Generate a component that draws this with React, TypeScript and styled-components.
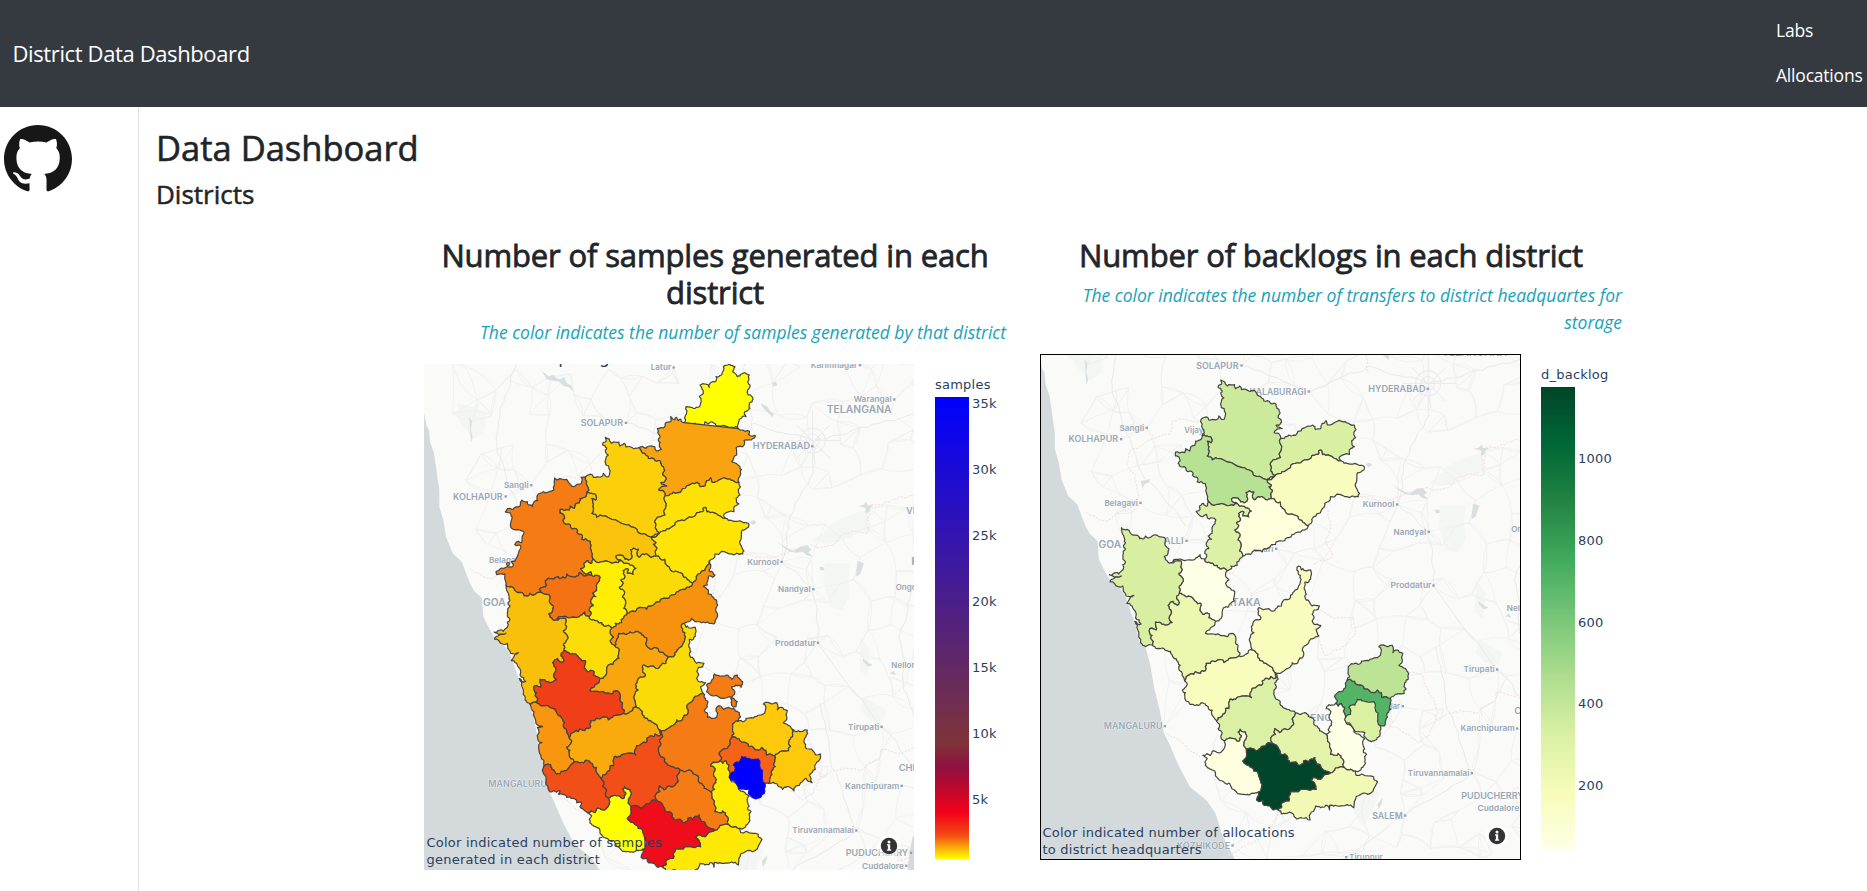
import React from "react";
import styled, { createGlobalStyle } from "styled-components";

const GlobalStyle = createGlobalStyle`
  *, *::before, *::after { box-sizing: border-box; }
  html, body { margin: 0; height: 100%; overflow: hidden; background: #fff; }
  body { font-family: "Open Sans", "Noto Sans", sans-serif; color: #212529; font-size: 17px; }
`;

/* ---------- geometry: map units are a third of a pixel ---------- */

type Pt = [number, number];

const parse = (s: string): Pt[] =>
  s.trim().split(/\s+/).map((p) => p.split(",").map(Number) as Pt);

const random = (seed: number) => () => {
  seed = (seed * 1664525 + 1013904223) >>> 0;
  return seed / 4294967296;
};

const roughen = (pts: Pt[], rnd: () => number, amount: number, depth: number): Pt[] => {
  if (depth === 0) return pts;
  const out: Pt[] = [pts[0]];
  for (let i = 1; i < pts.length; i++) {
    const [ax, ay] = pts[i - 1];
    const [bx, by] = pts[i];
    const len = Math.hypot(bx - ax, by - ay);
    if (len > 7) {
      const d = (rnd() - 0.5) * Math.min(11, len * amount);
      const t = 0.4 + rnd() * 0.2;
      out.push([ax + (bx - ax) * t - ((by - ay) / len) * d, ay + (by - ay) * t + ((bx - ax) / len) * d]);
    }
    out.push([bx, by]);
  }
  return roughen(out, rnd, amount, depth - 1);
};

const borders: Record<string, string> = {
  bidarOut: "955,236 958,208 978,200 975,185 990,175 988,160 999,148 985,135 990,110 983,95 988,75 965,72 952,80 938,65 945,50 928,42 910,50 905,75 888,80 885,95 870,100 868,112 855,102 840,105 850,130 838,140 840,168 820,175 798,170 800,190 795,200 792,218",
  bidarKal: "792,218 812,222 830,225 848,232 855,215 863,222 880,218 890,228 935,232 955,236",
  kalWest: "792,218 783,208 775,212 770,202 764,210 752,200 752,215 735,222 731,234 712,236 713,248 720,262 715,270 718,288 724,298 705,298 704,290 690,288 678,295 657,293",
  kalVij: "657,293 663,302 674,310 685,325 705,332 722,335 730,350 728,375 738,385 730,398 722,398 740,408 722,412 716,420 733,427 735,438",
  kalYad: "735,438 750,432 760,427 780,428 800,408 832,397 840,410 855,408 860,392 872,384 876,397 905,386 930,387 945,396 957,398",
  kalEast: "957,398 962,370 960,350 935,335 950,315 952,290 968,290 972,272 990,270 1007,258 985,252 988,243 965,240 955,236",
  vijWest: "657,293 640,295 618,291 612,280 600,288 597,276 575,280 568,268 556,262 558,274 548,285 560,294 556,300 565,315 557,340 566,348 566,380 556,378 550,370 548,378 520,382 518,376 497,380",
  vijBel: "497,380 500,395 505,412 500,428",
  vijBag: "500,428 515,430 525,432 527,450 515,445 518,470 515,490 530,502 540,495 560,500 620,525 650,537 655,548 695,562",
  vijYad: "695,562 705,553 718,548 706,535 704,515 712,502 722,500 735,495 733,450 735,438",
  yadEast: "957,398 955,425 960,435 948,445 957,462 945,468 942,485 912,493 917,505",
  yadRai: "917,505 890,492 865,484 861,486 856,472 850,474 848,485 830,488 800,506 780,512 765,525 740,537 718,550 695,562",
  raiEast: "917,505 935,512 965,515 974,518 987,524 985,532 967,540 964,560 965,590 968,612 950,610 920,608 885,612 868,632",
  raiBal: "868,632 858,652 835,672 830,685 818,700",
  raiKop: "705,618 715,618 722,628 734,628 735,640 750,658 765,664 780,668 792,682 805,690 818,700",
  raiBag: "695,562 700,572 708,578 700,582 710,592 706,608 705,618",
  bagBel: "500,428 497,440 480,445 478,458 466,462 463,475 450,468 448,480 420,478 420,490 432,498 428,512 432,520 445,522 455,536 472,540 475,552 483,553 485,568 510,573 513,600 518,625",
  bagGad: "518,625 535,638 550,635 583,638 605,632",
  bagKop: "605,632 588,618 608,616 615,628 635,625 632,600 655,598 657,622 668,612 680,612 695,622 705,618",
  belOut: "497,380 483,382 485,400 465,408 448,400 440,388 418,386 410,390 404,384 402,420 370,425 352,436 353,452 340,460 338,470 325,465 322,455 306,450 300,468 280,478 262,476 256,486 272,490 276,505 273,533 300,540 312,550 305,578 295,574 284,583 302,587 292,620 274,635 278,650 258,652 245,654 228,665 230,674 255,672 258,705",
  belUk: "258,705 275,710 285,722 306,728 312,738 325,738 330,730 340,736 350,730 368,730",
  belDha: "368,730 358,718 368,712 380,705 376,692 386,685 415,680 418,686 438,683 440,672 455,680 470,678 478,668 490,678 515,675",
  gadNotch: "518,625 515,640 508,638 504,632 492,640 494,650 482,656 492,668 502,672 513,665 515,675",
  dhaGad: "515,675 530,676 541,682 532,700 530,722 518,730 528,740 513,750 520,768 508,782 514,790 508,800 515,810",
  dhaHav: "437,805 412,806 420,800 455,802 478,800 482,795 494,786 498,798 508,800 515,810",
  dhaUk: "368,730 380,733 390,740 388,752 400,768 397,782 386,792 397,808 408,810 437,805",
  gadHav: "515,810 525,812 535,818 545,818 552,828 565,826 575,834",
  gadBal: "575,834 588,828 586,820 605,818 612,800 622,790",
  gadKop: "622,790 612,775 613,745 608,742 610,720 598,712 607,705 603,690 615,678 610,662 625,658 622,670 640,673 640,662 648,655 630,645 622,640 605,632",
  kopBal: "622,790 645,785 650,778 680,778 686,768 720,755 722,748 745,745 755,735 775,725 800,712 808,712 818,700",
  balEast: "868,632 872,650 870,665 885,675 878,682 866,678 862,705 850,710 865,720 864,732 880,742 890,752 893,765 888,775 892,790 885,818 870,820 855,818 830,815 815,805 808,815 790,820",
  balChi: "790,820 784,832 795,848 794,870 785,890 772,900 765,915 752,920",
  balDav: "585,888 590,868 597,850 615,853 630,846 655,845 665,855 680,864 678,885 690,897 708,893 716,903 735,915 752,920",
  havBal: "575,834 570,846 580,862 570,872 585,888",
  havDav: "585,888 597,905 597,925 585,932 580,942 565,945 560,965 550,985 540,986",
  havShi: "540,986 520,975 522,965 502,965 495,942 496,932 478,925 465,912 450,912 432,902",
  havUk: "432,902 430,885 440,870 436,850 430,842 440,830 437,805",
  ukShi: "432,902 424,910 432,930 425,938 413,926 398,938 408,960 402,972 410,990 398,996 385,995 375,990 360,988 362,1012 343,1008 350,1028 346,1038 352,1058",
  ukCoast: "352,1058 340,1056 330,1062 315,1050 306,1010 298,986 317,994 300,975 294,950 290,940 274,932 295,908 272,910 262,880 248,882 238,874 224,868 228,860 258,850 240,854 222,846 240,840 250,844 262,832 270,808 262,788 270,768 264,758 268,742 258,705",
  shiDav: "540,986 525,1005 510,1022 540,1026 575,1032 580,1024 597,1026 600,1050 606,1068 610,1090",
  shiChk: "610,1090 580,1098 565,1110 562,1102 530,1105 525,1112 512,1112 510,1134 500,1134 495,1142 480,1137 475,1145 458,1148 448,1165",
  shiUdu: "352,1060 370,1067 385,1068 405,1076 410,1088 422,1098 428,1108 430,1130 440,1148 448,1165",
  uduChk: "448,1165 454,1178 440,1192 450,1200 448,1210 463,1235",
  uduDk: "463,1235 450,1248 436,1262 420,1272 405,1266 395,1258 392,1244 372,1248",
  uduCoast: "372,1248 362,1215 356,1185 366,1178 354,1170 352,1132 368,1130 348,1120 342,1085 330,1062 352,1060",
  dkChk: "463,1235 480,1238 490,1238 500,1230 515,1240 530,1252 536,1275 543,1285",
  dkHas: "543,1285 552,1295 548,1308 560,1320 556,1330 566,1344",
  dkKod: "566,1344 563,1372 548,1380 534,1374 525,1388 502,1388",
  dkSouth: "502,1388 488,1376 480,1370 485,1358 470,1358 460,1345 440,1342 436,1335 415,1332 420,1322 400,1322 390,1326 378,1290 372,1248",
  chkDav: "610,1090 630,1085 650,1072",
  chkChi: "650,1072 662,1080 668,1095 682,1105 695,1115 718,1140",
  chkHas: "718,1140 722,1155 705,1152 700,1160 680,1165 678,1178 650,1187 648,1215 608,1213 600,1220 583,1220 580,1248 570,1248 568,1262 548,1275 543,1285",
  davChi: "752,920 738,940 720,948 715,955 700,948 672,945 668,960 675,980 652,992 648,1005 655,1020 645,1032 650,1072",
  chiEast: "790,820 798,832 802,828 826,832 826,850 820,868 808,868 806,885 810,895 808,912 820,925 830,940 840,938 852,940 848,950 836,952 830,965 836,975 830,985 840,996 856,998 842,1010 845,1020 850,1030",
  chiTum: "850,1030 832,1038 820,1050 802,1065 803,1092 792,1096 785,1112 770,1110 765,1122 745,1135 730,1142 718,1140",
  tumNorth: "850,1030 853,1042 864,1055 862,1070 853,1080 862,1102 890,1102 893,1088 888,1082 892,1070 902,1068 910,1078 940,1075 945,1082 958,1088 955,1112 938,1122",
  tumCkb: "938,1122 938,1135 942,1150 935,1162",
  tumRur: "935,1162 930,1185 922,1195 898,1208 905,1222 900,1232",
  tumRam: "900,1232 880,1236 872,1248 885,1262 883,1280 888,1298 878,1310 884,1318 872,1325",
  tumMan: "872,1325 852,1315 845,1300 835,1295 828,1275 815,1265 800,1262 780,1260",
  tumHas: "780,1260 768,1255 755,1250 740,1240 733,1225 718,1212 715,1195 722,1185 718,1170 728,1160 718,1140",
  hasMan: "780,1260 770,1280 775,1292 765,1306 740,1312 732,1320 718,1308 720,1325 710,1330 712,1353",
  hasMys: "712,1353 695,1352 690,1360 678,1362 668,1372 650,1368 633,1372",
  hasKod: "633,1372 625,1348 632,1335 630,1318 622,1318 614,1310 608,1318 618,1330 612,1345 595,1338 572,1340 566,1344",
  kodOut: "502,1388 515,1398 508,1408 516,1425 530,1432 545,1455 575,1475 582,1472 600,1495 620,1505 640,1507 655,1502 668,1498",
  kodMys: "668,1498 680,1475 672,1455 655,1435 640,1418 622,1405 633,1388 633,1372",
  mysMan: "712,1353 728,1365 737,1385 755,1390 762,1410 785,1412 795,1418 804,1405 820,1410 825,1400 838,1395 845,1415 855,1418 865,1433 885,1441",
  mysCha: "885,1441 862,1452 855,1460 840,1455 826,1462 838,1475 842,1490 805,1490 765,1497 760,1525 740,1530 738,1545 728,1552",
  mysOut: "728,1552 715,1552 703,1540 682,1534 684,1525 663,1522 668,1498",
  manRam: "872,1325 876,1345 885,1385 905,1388 908,1382 920,1398 925,1405 927,1425",
  manCha: "927,1425 900,1426 885,1441",
  ramRur: "900,1232 908,1240 918,1232 928,1245 924,1256 930,1275",
  ramUrb: "930,1275 935,1295 955,1310 975,1328 988,1338",
  ramOut: "988,1338 982,1355 984,1380 993,1385 990,1412 978,1425 960,1435",
  ramCha: "960,1435 945,1430 927,1425",
  chaOut: "960,1435 962,1448 1000,1450 1015,1453 1026,1468 1005,1502 978,1504 962,1512 955,1545 935,1536 905,1540 882,1538 882,1552 870,1538 855,1545 840,1540 828,1558 824,1582 800,1576 783,1579 775,1568 755,1562 740,1564 728,1552",
  rurCkb: "935,1162 950,1165 962,1174 978,1178 985,1188 1000,1192 1015,1200 1025,1192 1038,1200 1040,1215 1065,1217",
  rurKol: "1065,1217 1062,1240 1066,1250 1055,1262 1050,1285 1046,1300",
  rurIn: "1046,1300 1030,1304 1010,1300 1005,1245 975,1240 965,1265 930,1275",
  ckbOut: "938,1122 958,1112 975,1112 978,1105 1000,1104 1022,1095 1035,1085 1030,1062 1055,1062 1070,1058 1072,1080 1085,1072 1102,1082 1100,1108 1090,1118 1110,1128 1117,1138",
  ckbKol: "1117,1138 1118,1160 1108,1170 1106,1202 1080,1205 1065,1217",
  kolOut: "1117,1138 1135,1142 1162,1140 1158,1160 1154,1165 1156,1192 1178,1202 1185,1212 1202,1212 1194,1235 1185,1245 1186,1258 1168,1275 1176,1298 1158,1285 1142,1298 1122,1323 1100,1310 1088,1318 1072,1302 1046,1300",
  urban: "965,1220 985,1225 1015,1227 1020,1250 1028,1262 1026,1285 1036,1310 1025,1335 1008,1347 985,1330 988,1320 975,1318 955,1310 932,1290 930,1275 945,1265 940,1245 958,1238 965,1220",
  enclaveA: "883,972 892,976 920,975 935,988 942,978 952,975 958,985 968,995 963,1012 948,1005 935,1010 942,1020 935,1042 910,1045 880,1038 860,1025 860,1005 872,998 883,972",
  enclaveB: "932,1045 945,1050 952,1055 948,1070 935,1066 932,1045",
};

const arcs: Record<string, Pt[]> = {};
Object.keys(borders).forEach((name, i) => {
  arcs[name] = roughen(parse(borders[name]), random(i * 977 + 31), 0.5, 2);
});

const outline = (list: string) =>
  list
    .split(" ")
    .map((name) => (name[0] === "-" ? [...arcs[name.slice(1)]].reverse() : arcs[name]))
    .flat()
    .map(([x, y], i) => `${i ? "L" : "M"}${x.toFixed(1)} ${y.toFixed(1)}`)
    .join("") + "Z";

interface District { d: string; samples: string; backlog?: string }

const districts: District[] = [
  { d: outline("bidarOut bidarKal"), samples: "#ffff00" },
  { d: outline("kalWest kalVij kalYad kalEast"), samples: "#f8a30f" },
  { d: outline("vijWest vijBel vijBag vijYad -kalVij"), samples: "#fbcf0a", backlog: "#cbea9b" },
  { d: outline("kalYad yadEast yadRai vijYad"), samples: "#fee105", backlog: "#d9f0a2" },
  { d: outline("-yadRai raiEast raiBal -raiKop -raiBag"), samples: "#ffe404", backlog: "#f8fcbf" },
  { d: outline("vijBag raiBag -bagKop -bagGad -bagBel"), samples: "#f9c20b", backlog: "#b8e293" },
  { d: outline("-vijBel belOut belUk belDha -gadNotch -bagBel"), samples: "#f57c14" },
  { d: outline("belDha dhaGad -dhaHav -dhaUk"), samples: "#f47214" },
  { d: outline("gadNotch dhaGad gadHav gadBal gadKop -bagGad"), samples: "#ffee00", backlog: "#ddf1a6" },
  { d: outline("bagKop raiKop -kopBal gadKop"), samples: "#fbdb06", backlog: "#ffffdc" },
  { d: outline("kopBal -raiBal balEast balChi -balDav -havBal gadBal"), samples: "#f7920f" },
  { d: outline("dhaHav gadHav havBal havDav havShi havUk"), samples: "#fbdc07", backlog: "#ffffe5" },
  { d: outline("belUk dhaUk -havUk ukShi ukCoast"), samples: "#f9c00b", backlog: "#d8efa1" },
  { d: outline("-ukShi -havShi shiDav shiChk -shiUdu"), samples: "#f03f17", backlog: "#ebf6af" },
  { d: outline("shiUdu uduChk uduDk uduCoast"), samples: "#f8960f" },
  { d: outline("-uduDk dkChk dkHas dkKod dkSouth"), samples: "#f24e18" },
  { d: outline("-shiChk chkDav chkChi chkHas -dkChk -uduChk"), samples: "#f9ab0e", backlog: "#f8fcbd" },
  { d: outline("balDav davChi -chkDav -shiDav -havDav"), samples: "#f9a50e" },
  { d: outline("-balChi chiEast chiTum -chkChi -davChi"), samples: "#fbdb06", backlog: "#f8fcbd" },
  { d: outline("-chiTum tumNorth tumCkb tumRur tumRam tumMan tumHas"), samples: "#f57c14" },
  { d: outline("-chkHas -tumHas hasMan hasMys hasKod -dkHas"), samples: "#f24e18", backlog: "#daf0a4" },
  { d: outline("dkKod kodOut kodMys hasKod"), samples: "#ffff00", backlog: "#ffffdf" },
  { d: outline("-tumMan manRam manCha -mysMan -hasMan"), samples: "#f57c14", backlog: "#e3f4aa" },
  { d: outline("-tumRam ramRur ramUrb ramOut ramCha -manRam"), samples: "#ffec02", backlog: "#ffffe5" },
  { d: outline("-manCha -ramCha chaOut -mysCha"), samples: "#ffe904", backlog: "#f1f9b5" },
  { d: outline("mysMan mysCha mysOut kodMys -hasMys"), samples: "#f00d1b", backlog: "#00452a" },
  { d: outline("rurCkb rurKol rurIn -ramRur -tumRur"), samples: "#f46316", backlog: "#54b365" },
  { d: outline("ckbOut ckbKol -rurCkb -tumCkb"), samples: "#fdc90a", backlog: "#bde494" },
  { d: outline("kolOut -rurKol -ckbKol"), samples: "#fdc90a" },
  { d: outline("enclaveA"), samples: "#f57c14" },
  { d: outline("enclaveB"), samples: "#f57c14" },
  { d: outline("urban"), samples: "#0000ff", backlog: "#daf0a3" },
];

/* ---------- base map ---------- */

type Field = "samples" | "backlog";

interface Place { t: string; x: number; w: number; y: number; dot?: number; size?: number; only?: Field }

const places: Place[] = [
  { t: "Latur", x: 692, w: 62, y: 53, dot: 761, only: "samples" },
  { t: "Karimnagar", x: 1172, w: 140, y: 46, dot: 1320, only: "samples" },
  { t: "Warangal", x: 1301, w: 114, y: 149, dot: 1423, only: "samples" },
  { t: "TELANGANA", x: 1220, w: 195, y: 179, size: 29 },
  { t: "SOLAPUR", x: 482, w: 127, y: 219, dot: 618, size: 25 },
  { t: "HYDERABAD", x: 998, w: 172, y: 289, dot: 1177, size: 25 },
  { t: "KALABURAGI", x: 642, w: 170, y: 297, dot: 820, size: 25, only: "backlog" },
  { t: "Vijayapura", x: 446, w: 125, y: 414, only: "backlog" },
  { t: "Sangli", x: 252, w: 74, y: 406, dot: 334 },
  { t: "KOLHAPUR", x: 99, w: 149, y: 440, dot: 257, size: 25 },
  { t: "Belagavi", x: 207, w: 100, y: 631, dot: 315 },
  { t: "Kurnool", x: 982, w: 95, y: 636, dot: 1085 },
  { t: "Nandyal", x: 1074, w: 98, y: 718, dot: 1180 },
  { t: "Ongole", x: 1427, w: 84, y: 711 },
  { t: "VIJAYAWADA", x: 1459, w: 176, y: 483, size: 25, only: "samples" },
  { t: "PRADESH", x: 1474, w: 170, y: 634, size: 29, only: "samples" },
  { t: "GOA", x: 189, w: 68, y: 757, size: 29 },
  { t: "HUBBALLI", x: 310, w: 134, y: 745, dot: 453, size: 25, only: "backlog" },
  { t: "Ballari", x: 640, w: 74, y: 769, dot: 722, only: "backlog" },
  { t: "KARNATAKA", x: 478, w: 198, y: 930, size: 29, only: "backlog" },
  { t: "Proddatur", x: 1065, w: 123, y: 879, dot: 1194 },
  { t: "Nellore", x: 1414, w: 84, y: 947 },
  { t: "Tirupati", x: 1284, w: 94, y: 1131, dot: 1385 },
  { t: "Kolar", x: 1037, w: 57, y: 1241, dot: 1102, only: "backlog" },
  { t: "CHENNAI", x: 1436, w: 130, y: 1254, size: 25 },
  { t: "BENGALURU", x: 804, w: 190, y: 1277, size: 25, only: "backlog" },
  { t: "MANGALURU", x: 205, w: 176, y: 1301, dot: 388, size: 25 },
  { t: "Kanchipuram", x: 1275, w: 163, y: 1308, dot: 1445 },
  { t: "Tiruvannamalai", x: 1117, w: 185, y: 1442, dot: 1309 },
  { t: "PUDUCHERRY", x: 1277, w: 188, y: 1509, dot: 1473, size: 25 },
  { t: "Cuddalore", x: 1326, w: 126, y: 1548, dot: 1459 },
  { t: "SALEM", x: 1010, w: 92, y: 1569, dot: 1109, size: 25, only: "backlog" },
  { t: "KOZHIKODE", x: 424, w: 160, y: 1659, dot: 591, size: 25, only: "backlog" },
  { t: "Tiruppur", x: 941, w: 101, y: 1694, dot: 932, only: "backlog" },
];

const sea =
  "M0 180L12 190L20 228L27 240L30 275L42 310L48 350L52 380L58 420L58 470L70 510L78 560L98 610L125 635L150 700L162 722L186 745L190 800L205 830L222 860L250 882L270 912L298 990L312 1048L330 1064L345 1120L356 1185L372 1250L385 1320L400 1350L430 1420L463 1482L485 1500L515 1525L540 1562L558 1622L580 1665L603 1710L0 1710Z";

const lakes = [
  "M365 62L385 78L400 75L410 85L422 88L432 80L440 98L455 108L460 125L448 112L430 108L418 95L398 92L380 88Z",
  "M1022 160L1040 168L1052 185L1062 190L1058 202L1045 190L1030 175Z",
  "M1055 98L1068 95L1072 106L1060 110Z",
  "M1065 570L1085 585L1108 597L1122 603L1140 590L1160 586L1175 600L1165 606L1178 620L1160 616L1148 605L1130 608L1110 605L1090 592Z",
  "M1313 632L1332 640L1320 672L1308 680L1310 655Z",
  "M1315 468L1330 465L1338 456L1343 466L1360 466L1350 474L1345 488L1336 488L1338 474Z",
  "M990 515L1002 510L1010 518L998 524Z",
  "M1328 925L1345 938L1358 945L1345 950L1330 935Z",
  "M1408 972L1420 962L1428 975L1415 972Z",
  "M1025 1535L1042 1515L1038 1535L1030 1550Z",
  "M1198 652L1210 650L1214 660L1202 662Z",
  "M148 200L156 215L152 238L158 262L153 278L150 240Z",
  "M316 565L345 560L338 570L328 575L320 588Z",
];

const parks = [
  "M1210 550L1240 520L1300 490L1340 480L1345 540L1300 548L1260 575L1215 580L1180 570Z",
  "M1215 640L1290 640L1285 700L1290 740L1265 780L1230 770L1210 700Z",
  "M110 160L160 170L200 190L195 240L165 265L140 240L115 210Z",
  "M1330 1040L1400 1080L1390 1115L1350 1110L1320 1080Z",
  "M1020 1210L1070 1240L1060 1300L1020 1290Z",
  "M960 1500L1000 1480L1030 1500L1010 1560L980 1600L950 1550Z",
  "M1320 860L1350 900L1340 980L1320 960Z",
];

const stateLines = [
  "975,42 970,90 985,130 995,200 1000,240",
  "965,612 1000,620 1060,622 1100,610 1140,590 1180,585 1215,590 1240,585 1265,555 1310,545 1345,548 1345,500 1350,465 1400,455 1440,440 1485,435",
  "500,385 445,380 410,385 400,425 350,440 325,455 280,478 275,520 300,545 310,610 290,640 240,665 215,685 150,655",
  "868,632 885,690 870,740 890,790 830,815",
  "845,950 880,968 955,975 960,1020 930,1060 870,1090 850,1030",
  "1120,1140 1160,1145 1180,1205 1200,1230 1200,1280 1180,1330 1150,1350 1120,1325 1060,1300",
  "1200,1280 1260,1258 1320,1262 1345,1240 1380,1225 1380,1200 1440,1212 1485,1195",
  "395,1322 440,1350 490,1390 520,1430",
  "1430,1500 1440,1485 1465,1490 1465,1525 1430,1530",
  "560,1700 700,1620 730,1560",
];

const wobble = (s: string, seed: number) =>
  roughen(parse(s), random(seed), 0.3, 3)
    .map(([x, y], i) => `${i ? "L" : "M"}${x.toFixed(1)} ${y.toFixed(1)}`)
    .join("");

/* road web: every junction is tied to its nearest neighbours */
const roadWeb = (() => {
  const rnd = random(4211);
  const nodes: Pt[] = places.filter((p) => p.dot).map((p) => [p.dot as number, p.y]);
  for (let gx = 0; gx < 20; gx++) {
    for (let gy = 0; gy < 22; gy++) {
      const x = 40 + gx * 78 + rnd() * 66;
      const y = 20 + gy * 78 + rnd() * 66;
      const coast = y < 700 ? 20 + y * 0.22 : y < 1100 ? 200 + (y - 700) * 0.38 : 350 + (y - 1100) * 0.42;
      if (x > coast + 20) nodes.push([x, y]);
    }
  }
  let d = "";
  nodes.forEach(([x, y], i) => {
    nodes
      .map(([a, b], j) => ({ j, dist: Math.hypot(a - x, b - y) }))
      .filter((n) => n.j !== i)
      .sort((p, q) => p.dist - q.dist)
      .slice(0, 3)
      .forEach(({ j, dist }) => {
        const [a, b] = nodes[j];
        const k = (rnd() - 0.5) * dist * 0.4;
        d += `M${x | 0} ${y | 0}Q${((x + a) / 2 + k) | 0} ${((y + b) / 2 - k) | 0} ${a | 0} ${b | 0}`;
      });
  });
  return d;
})();

const PlaceName = styled.text`
  font-family: "Inter", "Open Sans", sans-serif;
  font-weight: 600;
  fill: #98a7b6;
  stroke: #fafaf8;
  stroke-width: 2px;
  paint-order: stroke;
`;

const BaseMap = ({ field }: { field: Field }) => (
  <g>
    <rect x="0" y="0" width="1500" height="1720" fill="#fafaf8" />
    {parks.map((d, i) => <path key={i} d={d} fill="#f4f6f4" />)}
    <path d={roadWeb} fill="none" stroke="#eff0ef" strokeWidth="2.4" />
    <g fill="none" stroke="#e9eaea" strokeWidth="3">
      <circle cx="1178" cy="272" r="38" />
      <circle cx="1178" cy="272" r="20" />
      <path d="M1178 180V350M1100 272H1260M1130 225L1230 325M1230 225L1130 325" />
      <path d={wobble("290,42 240,180 230,290 260,400 330,560 450,700", 7)} />
      <path d={wobble("618,219 820,300 1000,220 1178,272 1300,240 1485,190", 8)} />
      <path d={wobble("1178,272 1180,370 1110,500 1085,636 1180,718 1194,879 1385,1131 1485,1250", 9)} />
      <path d={wobble("1200,1060 1230,1230 1309,1442 1109,1569 932,1694", 12)} />
      <path d={wobble("1485,700 1440,850 1450,1000 1485,1120", 15)} />
    </g>
    <path d={sea} fill="#d4dadc" />
    <path d="M1500 1430L1478 1460L1470 1500L1462 1570L1500 1570Z" fill="#d4dadc" />
    {lakes.map((d, i) => <path key={i} d={d} fill="#d9dfe1" />)}
    {stateLines.map((s, i) => (
      <path key={i} d={wobble(s, i + 50)} fill="none" stroke="#f3dede" strokeWidth="3" strokeDasharray="7 4" />
    ))}
    {places
      .filter((p) => !p.only || p.only === field)
      .map((p) => (
        <React.Fragment key={p.t}>
          <PlaceName x={p.x} y={p.y + (p.size || 23) * 0.36} textLength={p.w} lengthAdjust="spacingAndGlyphs" fontSize={p.size || 23}>
            {p.t}
          </PlaceName>
          {p.dot && <rect x={p.dot - 3.5} y={p.y - 4} width="7" height="7" fill="#94a2b0" />}
        </React.Fragment>
      ))}
  </g>
);

/* ---------- page parts ---------- */

const Navbar = styled.header`
  height: 107px;
  background: #343a40;
  color: #fff;
  display: flex;
  align-items: center;
  justify-content: space-between;
  padding: 0 4px 0 12.5px;
`;

const Brand = styled.div`
  font-size: 22px;
  letter-spacing: -0.38px;
  padding-bottom: 1px;
`;

const NavLinks = styled.nav`
  width: 87px;
  display: flex;
  flex-direction: column;
  padding-bottom: 2px;
`;

const NavItem = styled.span`
  height: 45px;
  line-height: 45px;
  font-size: 17.5px;
  letter-spacing: -0.2px;
  white-space: nowrap;
`;

const Body = styled.div`
  display: flex;
  height: 784px;
`;

const Sidebar = styled.aside`
  width: 139px;
  flex: none;
  border-right: 1px solid #dee2e6;
  padding: 18px 0 0 4px;
`;

const Main = styled.main`
  flex: 1;
  padding: 17px 0 0 17px;
`;

const Title = styled.h1`
  margin: 0;
  height: 51px;
  line-height: 48px;
  font-size: 34.5px;
  font-weight: 400;
  -webkit-text-stroke: 0.6px currentColor;
`;

const Subtitle = styled.h2`
  margin: 0;
  height: 62px;
  line-height: 38px;
  font-size: 26px;
  font-weight: 400;
  -webkit-text-stroke: 0.5px currentColor;
`;

const Charts = styled.section`
  display: grid;
  grid-template-columns: 582px 582px;
  column-gap: 34px;
  padding-left: 268px;
  align-items: start;
`;

const ChartTitle = styled.h3`
  margin: 0 0 8px;
  line-height: 37px;
  font-size: 31px;
  font-weight: 400;
  letter-spacing: -0.15px;
  -webkit-text-stroke: 0.8px currentColor;
  text-align: center;
`;

const Note = styled.p`
  margin: 0 0 18px;
  line-height: 27px;
  font-size: 17.5px;
  font-style: italic;
  color: #17a2b8;
  text-align: right;
`;

const Plot = styled.div`
  display: flex;
  color: #2a3f5f;
  font-family: Verdana, "DejaVu Sans", sans-serif;
  font-size: 13px;
  letter-spacing: 0.23px;
`;

const MapFrame = styled.div<{ $width: number; $outlined: boolean }>`
  position: relative;
  width: ${(p) => p.$width}px;
  height: 506px;
  overflow: hidden;
  outline: ${(p) => (p.$outlined ? "1px solid #000" : "none")};
  outline-offset: -1px;
  svg { display: block; }
`;

const Caption = styled.div`
  position: absolute;
  left: 2.5px;
  bottom: 2.5px;
  line-height: 17px;
  white-space: pre;
`;

const Info = styled.div<{ $right: number }>`
  position: absolute;
  right: ${(p) => p.$right}px;
  bottom: 12.5px;
  width: 24px;
  height: 24px;
  border-radius: 12px;
  background: rgba(255, 255, 255, 0.5);
`;

const Legend = styled.div<{ $gap: number }>`
  margin-left: ${(p) => p.$gap}px;
  padding-top: 12px;
`;

const LegendTitle = styled.div`
  height: 21px;
  line-height: 17px;
`;

const Scale = styled.div`
  display: flex;
  height: 462px;
`;

const Bar = styled.div<{ $colors: string }>`
  width: 34px;
  height: 462px;
  background: linear-gradient(${(p) => p.$colors});
`;

const Ticks = styled.div<{ $start: number; $step: number }>`
  margin-left: 3px;
  margin-top: ${(p) => p.$start - p.$step / 2}px;
  line-height: ${(p) => p.$step}px;
`;

const Tick = styled.div``;

interface ChartProps {
  title: string;
  note: string;
  caption: string;
  field: Field;
  width: number;
  view: string;
  legend: string;
  colors: string;
  ticks: string[];
  start: number;
  step: number;
}

const Chart = (p: ChartProps) => (
  <div>
    <ChartTitle>{p.title}</ChartTitle>
    <Note>{p.note}</Note>
    <Plot>
      <MapFrame $width={p.width} $outlined={p.field === "backlog"}>
        <svg width={p.width} height="506" viewBox={p.view} preserveAspectRatio="none">
          <BaseMap field={p.field} />
          {p.field === "samples" && (
            <text x="18" y="40" fontSize="51" fill="#2a3f5f">Number of samples generated in each district</text>
          )}
          {districts.map((d, i) => {
            const fill = d[p.field];
            return fill ? (
              <path key={i} d={d.d} fill={fill} stroke={fill === "#0000ff" ? "#1111dd" : "#444"} strokeWidth="3.6" strokeLinejoin="round" />
            ) : null;
          })}
          {p.field === "samples" && <circle cx="264" cy="642" r="5" fill="#f57c14" stroke="#444" strokeWidth="3" />}
        </svg>
        <Info $right={p.field === "backlog" ? 12.5 : 13.5}>
          <svg width="24" height="24" viewBox="0 0 24 24">
            <circle cx="12" cy="12" r="8.2" fill="#333" />
            <circle cx="12" cy="7.9" r="1.5" fill="#fff" />
            <path d="M10 10.2H13.2V15.4H14.2V16.8H9.9V15.4H10.9V11.6H10Z" fill="#fff" />
          </svg>
        </Info>
        <Caption>{p.caption}</Caption>
      </MapFrame>
      <Legend $gap={p.field === "backlog" ? 20 : 21}>
        <LegendTitle>{p.legend}</LegendTitle>
        <Scale>
          <Bar $colors={p.colors} />
          <Ticks $start={p.start} $step={p.step}>
            {p.ticks.map((t) => <Tick key={t}>{t}</Tick>)}
          </Ticks>
        </Scale>
      </Legend>
    </Plot>
  </div>
);

export default function App() {
  return (
    <>
      <GlobalStyle />
      <Navbar>
        <Brand>District Data Dashboard</Brand>
        <NavLinks>
          <NavItem>Labs</NavItem>
          <NavItem>Allocations</NavItem>
        </NavLinks>
      </Navbar>
      <Body>
        <Sidebar>
          <svg width="68" height="68" viewBox="0 0 16 16">
            <path
              fill="#181717"
              d="M8 0C3.58 0 0 3.58 0 8c0 3.54 2.29 6.53 5.47 7.59.4.07.55-.17.55-.38 0-.19-.01-.82-.01-1.49-2.01.37-2.53-.49-2.69-.94-.09-.23-.48-.94-.82-1.13-.28-.15-.68-.52-.01-.53.63-.01 1.08.58 1.23.82.72 1.21 1.87.87 2.33.66.07-.52.28-.87.51-1.07-1.78-.2-3.64-.89-3.64-3.95 0-.87.31-1.59.82-2.15-.08-.2-.36-1.02.08-2.12 0 0 .67-.21 2.2.82.64-.18 1.32-.27 2-.27s1.36.09 2 .27c1.53-1.04 2.2-.82 2.2-.82.44 1.1.16 1.92.08 2.12.51.56.82 1.27.82 2.15 0 3.07-1.87 3.75-3.65 3.95.29.25.54.73.54 1.48 0 1.07-.01 1.93-.01 2.2 0 .21.15.46.55.38A8.01 8.01 0 0 0 16 8c0-4.42-3.58-8-8-8z"
            />
          </svg>
        </Sidebar>
        <Main>
          <Title>Data Dashboard</Title>
          <Subtitle>Districts</Subtitle>
          <Charts>
            <Chart
              title="Number of samples generated in each district"
              note="The color indicates the number of samples generated by that district"
              caption={"Color indicated number of samples\ngenerated in each district"}
              field="samples"
              width={490}
              view="12 42 1470 1518"
              legend="samples"
              colors="#0000ff 0%, #7f3439 75%, #8e1040 80%, #f30019 90%, #f34a14 94.8%, #fba60a 97.4%, #ffff00 100%"
              ticks={["35k", "30k", "25k", "20k", "15k", "10k", "5k"]}
              start={7}
              step={66}
            />
            <Chart
              title="Number of backlogs in each district"
              note="The color indicates the number of transfers to district headquartes for storage"
              caption={"Color indicated number of allocations\nto district headquarters"}
              field="backlog"
              width={481}
              view="13.5 184 1443 1518"
              legend="d_backlog"
              colors="#004529, #006837, #238443, #41ab5d, #78c679, #addd8e, #d9f0a3, #f7fcb9, #ffffe5"
              ticks={["1000", "800", "600", "400", "200"]}
              start={72}
              step={81.8}
            />
          </Charts>
        </Main>
      </Body>
    </>
  );
}
